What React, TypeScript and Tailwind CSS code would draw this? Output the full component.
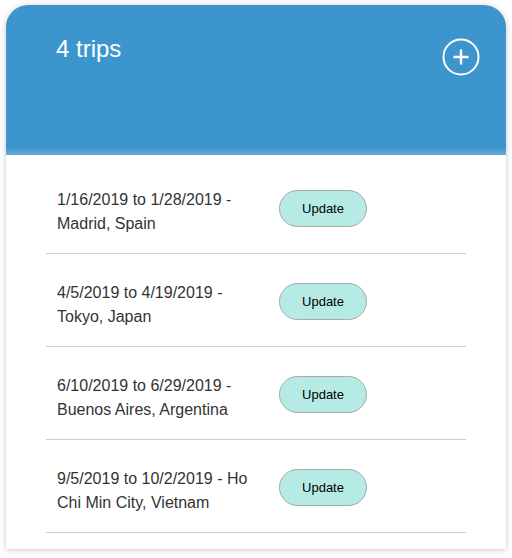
const trips = [
  { range: "1/16/2019 to 1/28/2019", place: "Madrid, Spain" },
  { range: "4/5/2019 to 4/19/2019", place: "Tokyo, Japan" },
  { range: "6/10/2019 to 6/29/2019", place: "Buenos Aires, Argentina" },
  { range: "9/5/2019 to 10/2/2019", place: "Ho Chi Min City, Vietnam" },
];

function PlusCircle() {
  return (
    <svg width="38" height="38" viewBox="0 0 38 38" fill="none" stroke="white" strokeWidth="2">
      <circle cx="19" cy="19" r="17.5" />
      <path d="M19 11.5v15M11.5 19h15" strokeWidth="2.4" />
    </svg>
  );
}

export default function App() {
  return (
    <div className="bg-white w-[512px] h-[558px] pt-[5px] px-[6px] font-['Liberation_Sans',Arial,sans-serif]">
      <div className="w-[500px] bg-white rounded-t-[22px] shadow-[0_1px_6px_rgba(0,0,0,0.22)]">
        {/* Header */}
        <div className="h-[150px] rounded-t-[22px] bg-[linear-gradient(to_bottom,#3d95ce_0%,#3d95ce_95%,#68aad3_100%)] flex items-start justify-between pl-[50px] pr-[26px] pt-[30px]">
          <h1 className="text-white text-[24px] leading-[28px]">4 trips</h1>
          <button className="mt-[3px]">
            <PlusCircle />
          </button>
        </div>

        {/* List */}
        <ul className="px-10 pt-[6px] pb-[16px]">
          {trips.map((t) => (
            <li
              key={t.range}
              className="flex items-start pl-[11px] pt-[27px] pb-[17px] border-b border-[#cccccc]"
            >
              <p className="w-[210px] text-[16px] leading-[24px] text-[#333333]">
                {`${t.range} - ${t.place}`}
              </p>
              <button className="ml-[12px] mt-[2px] w-[88px] h-[37px] rounded-full bg-[#b6ebe5] border border-[#aaaaaa] text-[13px] text-black">
                Update
              </button>
            </li>
          ))}
        </ul>
      </div>
    </div>
  );
}
